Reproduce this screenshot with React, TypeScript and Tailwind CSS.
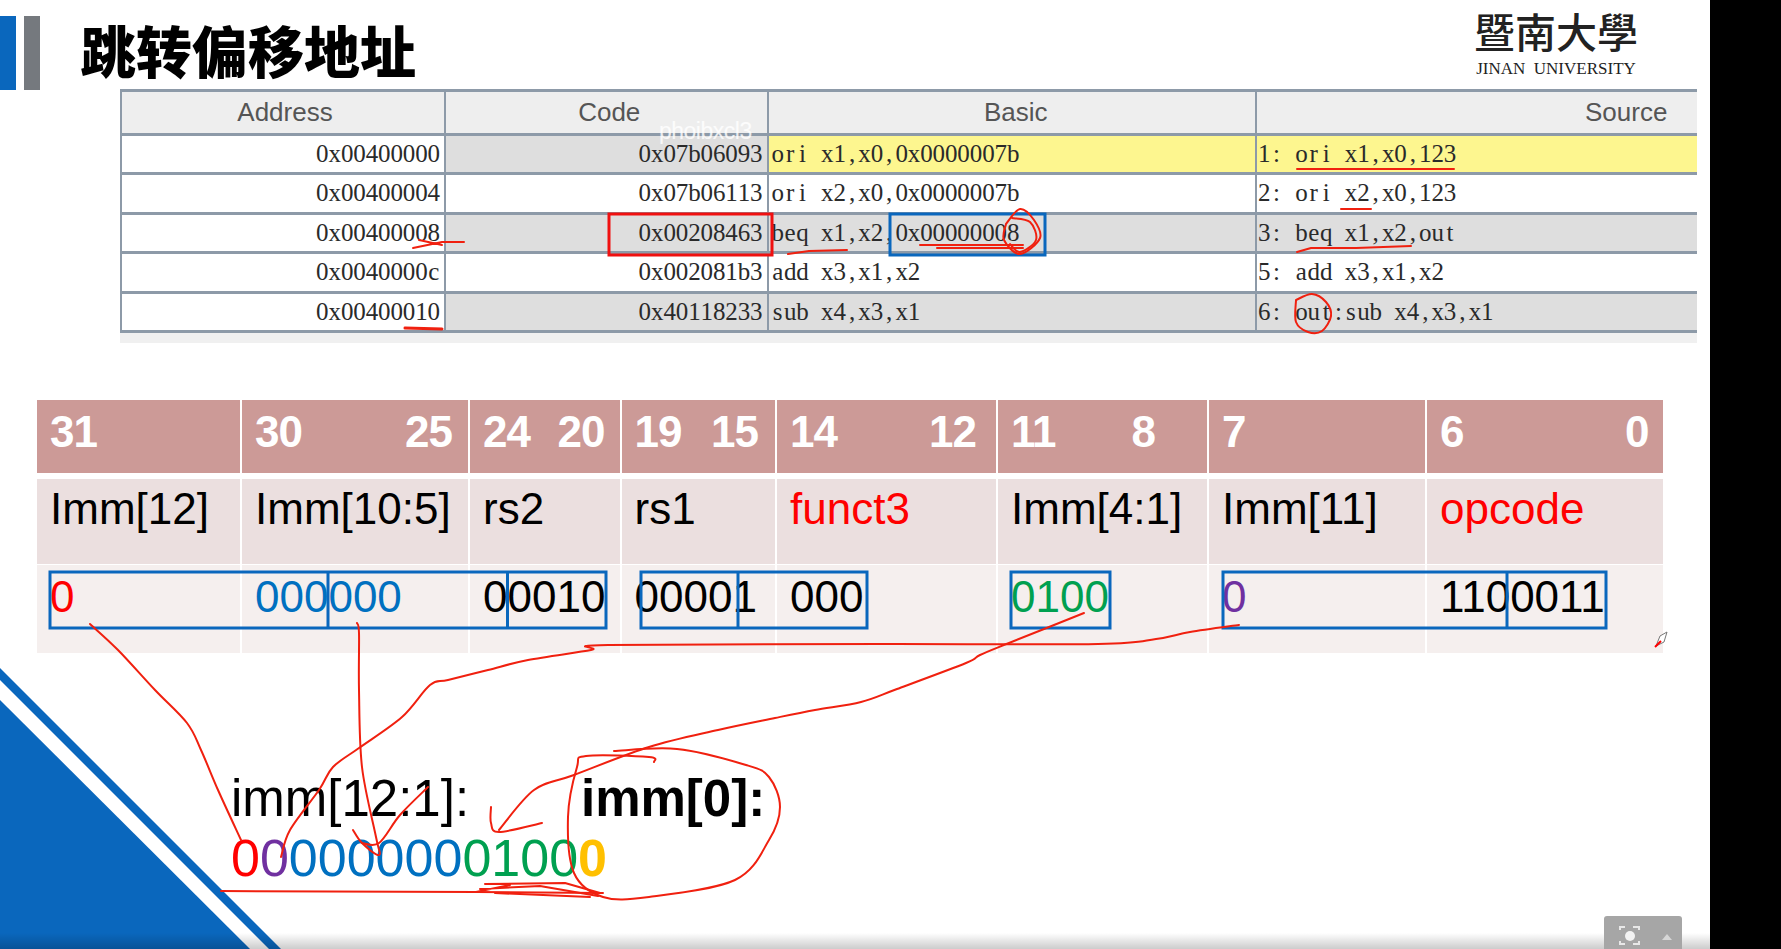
const sans = "font-['Liberation_Sans',Arial,sans-serif]"

const codeRows = [
  { addr: '0x00400000', code: '0x07b06093', basic: 'ori x1,x0,0x0000007b', source: '1: ori x1,x0,123', codeBg: 'bg-[#dedede]', lineBg: 'bg-[#fdf68f]' },
  { addr: '0x00400004', code: '0x07b06113', basic: 'ori x2,x0,0x0000007b', source: '2: ori x2,x0,123', codeBg: 'bg-white', lineBg: 'bg-white' },
  { addr: '0x00400008', code: '0x00208463', basic: 'beq x1,x2,0x00000008', source: '3: beq x1,x2,out', codeBg: 'bg-[#dedede]', lineBg: 'bg-[#dedede]' },
  { addr: '0x0040000c', code: '0x002081b3', basic: 'add x3,x1,x2', source: '5: add x3,x1,x2', codeBg: 'bg-white', lineBg: 'bg-white' },
  { addr: '0x00400010', code: '0x40118233', basic: 'sub x4,x3,x1', source: '6: out:sub x4,x3,x1', codeBg: 'bg-[#dedede]', lineBg: 'bg-[#dedede]' },
]

const fields = [
  { hi: '31', lo: '', loPad: 'pr-[14px]', name: 'Imm[12]', red: false },
  { hi: '30', lo: '25', loPad: 'pr-4', name: 'Imm[10:5]', red: false },
  { hi: '24', lo: '20', loPad: 'pr-[15px]', name: 'rs2', red: false },
  { hi: '19', lo: '15', loPad: 'pr-[17px]', name: 'rs1', red: false },
  { hi: '14', lo: '12', loPad: 'pr-5', name: 'funct3', red: true },
  { hi: '11', lo: '8', loPad: 'pr-[52px]', name: 'Imm[4:1]', red: false },
  { hi: '7', lo: '', loPad: 'pr-[14px]', name: 'Imm[11]', red: false },
  { hi: '6', lo: '0', loPad: 'pr-[14px]', name: 'opcode', red: true },
]

const bits = [
  { text: '0', color: 'text-[#ff0000]' },
  { text: '000000', color: 'text-[#0070c0]' },
  { text: '00010', color: 'text-black' },
  { text: '00001', color: 'text-black' },
  { text: '000', color: 'text-black' },
  { text: '0100', color: 'text-[#00a050]' },
  { text: '0', color: 'text-[#7030a0]' },
  { text: '1100011', color: 'text-black' },
]

const result = [
  { text: '0', color: 'text-[#ff0000]' },
  { text: '0', color: 'text-[#7030a0]' },
  { text: '000000', color: 'text-[#0070c0]' },
  { text: '0100', color: 'text-[#00a050]' },
  { text: '0', color: 'font-bold text-[#ffc000]' },
]

const gridCols = 'grid-cols-[205px_228px_151.5px_155.5px_221px_211px_218px_235.5px]'
const tableCols = 'grid-cols-[326px_322.5px_488.5px_440px]'

// the simulator's font is fixed pitch, so every character gets its own cell
const Mono = ({ text }: { text: string }) => (
  <span className="font-['Liberation_Serif',serif] text-[25px] leading-none text-[#2a2a2a]">
    {text.split('').map((c, i) => (
      <span key={i} className="inline-block w-[12.4px] text-center">
        {c === ' ' ? '\u00a0' : c}
      </span>
    ))}
  </span>
)

// hand drawn strokes: run a catmull-rom spline through the sampled points
const curve = (pts: number[][]) => {
  let d = `M${pts[0][0]} ${pts[0][1]}`
  for (let i = 0; i < pts.length - 1; i++) {
    const p0 = pts[i - 1] ?? pts[i]
    const p1 = pts[i]
    const p2 = pts[i + 1]
    const p3 = pts[i + 2] ?? p2
    const c1 = [p1[0] + (p2[0] - p0[0]) / 6, p1[1] + (p2[1] - p0[1]) / 6]
    const c2 = [p2[0] - (p3[0] - p1[0]) / 6, p2[1] - (p3[1] - p1[1]) / 6]
    d += `C${c1[0]} ${c1[1]} ${c2[0]} ${c2[1]} ${p2[0]} ${p2[1]}`
  }
  return d
}

const strokes = [
  [[90, 624], [118, 650], [155, 690], [187, 723], [201, 750], [218, 790], [241, 840]],
  [[357, 623], [359, 633], [359, 690], [362, 767], [376, 837], [379, 855], [362, 843], [353, 830]],
  [[362, 843], [379, 843], [400, 815], [428, 787]],
  [[281, 857], [290, 830], [319, 790], [333, 767], [359, 748], [402, 717], [430, 685], [448, 680], [488, 670], [528, 660], [591, 650], [608, 645], [880, 644], [1098, 644], [1156, 639], [1190, 632], [1239, 625]],
  [[1084, 613], [1009, 643], [980, 655], [966, 663], [897, 689], [861, 702], [815, 710], [775, 718], [718, 730], [649, 747], [574, 775], [534, 790], [499, 830]],
  [[491, 807], [491, 823], [499, 832], [542, 823]],
  [[654, 762], [649, 757], [586, 756], [577, 767], [568, 817], [574, 873], [603, 897], [649, 897], [735, 880], [769, 840], [780, 807], [769, 777], [746, 765], [677, 749], [614, 751]],
  [[1006, 224], [1020, 209], [1034, 220], [1040, 238], [1020, 254], [1004, 240], [1006, 224]],
  [[1012, 218], [1030, 222], [1036, 240], [1020, 252], [1010, 244]],
  [[1296, 300], [1312, 294], [1326, 302], [1331, 316], [1322, 331], [1308, 332], [1296, 322], [1296, 300]],
]

const Ink = () => (
  <svg className="pointer-events-none absolute left-0 top-0" width="1710" height="949" fill="none">
    {/* blue boxes */}
    <g stroke="#0a67bd" strokeWidth="3">
      <rect x="890" y="214" width="155" height="41" />
      <rect x="50" y="572" width="556" height="56" />
      <path d="M328 572V628M507.500 572V628" />
      <rect x="641" y="572" width="226" height="56" />
      <path d="M738 572V628" />
      <rect x="1011" y="572" width="99" height="56" />
      <rect x="1223" y="572" width="383" height="56" />
      <path d="M1507 572V628" />
    </g>
    <rect x="609" y="214" width="163" height="41" stroke="#f01010" strokeWidth="3" />
    <g stroke="#f0200f" strokeWidth="2" strokeLinecap="round" strokeLinejoin="round">
      {/* top table marks */}
      <path d="M413 248L442 242L464 242M419 240L442 245" />
      <path d="M405 328L442 329" strokeWidth="3" />
      <path d="M788 254L809 251L847 250" />
      <path d="M920 245L1023 245M937 248L1023 248" />
      <path d="M1297 169L1454 169M1341 209L1371 209" />
      <path d="M1297 252L1311 248L1356 248L1411 246" />
      {/* bit field to result lines and circles */}
      {strokes.map((pts, i) => (
        <path key={i} d={curve(pts)} />
      ))}
      <path d="M221 891L476 892L603 893" />
      <path d="M485 884L565 883L600 893M480 889L540 886L598 896M476 892L510 885M495 893L590 897" />
    </g>
    {/* pen cursor */}
    <path d="M1656 646L1660 636L1667 632L1664 642Z" stroke="#777" strokeWidth="1" fill="white" />
    <path d="M1655 647L1661 641" stroke="#f00" strokeWidth="2" />
  </svg>
)

export default function App() {
  return (
    <div className="flex h-[949px] w-[1781px] overflow-hidden bg-black">
      <div className="relative h-[949px] w-[1710px] overflow-hidden bg-white">
        <svg className="absolute left-0 top-0" width="300" height="949">
          <path d="M0 668L281 949H269L0 680Z" fill="#0a67bd" />
          <path d="M0 700L250 949H0Z" fill="#0a67bd" />
        </svg>

        <header className="flex h-[89px] items-start">
          <div className="mt-4 h-[74px] w-4 bg-[#0a67bd]" />
          <div className="ml-2 mt-4 h-[74px] w-4 bg-[#75797e]" />
          <h1 className="ml-10 mt-[21px] font-['Noto_Sans_CJK_SC',sans-serif] text-[56px] font-black leading-[56px] text-black">
            跳转偏移地址
          </h1>
          <div className="ml-auto mr-[72px] mt-0.5 w-[164px] text-[#222]">
            <div className="flex justify-between font-['Noto_Sans_CJK_TC',sans-serif] text-[41px] font-medium leading-[56px]">
              <span>暨</span>
              <span>南</span>
              <span>大</span>
              <span>學</span>
            </div>
            <div className="mt-0.5 whitespace-nowrap text-center font-['Liberation_Serif',serif] text-[17px] leading-[17px]">
              JINAN&nbsp; UNIVERSITY
            </div>
          </div>
        </header>

        <section className="relative ml-[120px] w-[1577px] bg-[#f0f0f0] pb-[10px]">
          <div className={`grid h-[47px] ${tableCols} border-y-[3px] border-[#8d9aa8] bg-[#eeeeee] font-['Liberation_Sans',sans-serif] text-[26px] leading-[41px] text-[#555]`}>
            <div className="border-x-2 border-[#8d9aa8] pl-1 text-center">Address</div>
            <div className="border-r-2 border-[#8d9aa8] pl-1.5 text-center">Code</div>
            <div className="border-r-2 border-[#8d9aa8] pl-2 text-center">Basic</div>
            <div className="pl-[328px]">Source</div>
          </div>
          {codeRows.map((row) => (
            <div key={row.addr} className={`grid h-[39.400px] ${tableCols} border-b-[3px] border-[#8d9aa8] leading-[31px]`}>
              <div className="border-x-2 border-[#8d9aa8] bg-white pr-1 pt-[5px] text-right">
                <Mono text={row.addr} />
              </div>
              <div className={`border-r-2 border-[#8d9aa8] pr-1 pt-[5px] text-right ${row.codeBg}`}>
                <Mono text={row.code} />
              </div>
              <div className={`border-r-2 border-[#8d9aa8] pl-[3px] pt-[5px] ${row.lineBg}`}>
                <Mono text={row.basic} />
              </div>
              <div className={`pl-px pt-[5px] ${row.lineBg}`}>
                <Mono text={row.source} />
              </div>
            </div>
          ))}
          <span className={`absolute left-[539px] top-[35px] block ${sans} text-[23px] leading-[14px] tracking-[-0.5px] text-white/80`}>
            phoibxcl3
          </span>
        </section>

        <section className={`ml-[37px] mt-[57px] w-[1625.500px] ${sans}`}>
          <div className={`grid h-[73px] ${gridCols} bg-[#cc9a97]`}>
            {fields.map((f) => (
              <div
                key={f.hi}
                className={`flex justify-between border-r-2 border-white pl-[13px] ${f.loPad} text-[44px] font-bold leading-[64px] tracking-[-1px] text-white last:border-r-0`}
              >
                <span>{f.hi}</span>
                <span>{f.lo}</span>
              </div>
            ))}
          </div>
          <div className={`mt-[6px] grid h-[85px] ${gridCols} bg-[#ebdfdf]`}>
            {fields.map((f) => (
              <div
                key={f.name}
                className={`border-r-2 border-white pl-[13px] text-[44px] leading-[60px] last:border-r-0 ${f.red ? 'text-[#ff0000]' : 'text-black'}`}
              >
                {f.name}
              </div>
            ))}
          </div>
          <div className={`mt-px grid h-[88px] ${gridCols} bg-[#f5efee]`}>
            {bits.map((b, i) => (
              <div
                key={i}
                className={`border-r-2 border-white pl-[13px] text-[44px] leading-[64px] last:border-r-0 ${b.color}`}
              >
                {b.text}
              </div>
            ))}
          </div>
        </section>

        <section className={`relative ml-[231px] mt-[114px] ${sans}`}>
          <div className="flex text-[51px] leading-[64px] text-black">
            <span className="w-[350px]">imm[12:1]:</span>
            <span className="font-bold">imm[0]:</span>
          </div>
          <div className="-mt-[5px] text-[52px] leading-[64px]">
            {result.map((r, i) => (
              <span key={i} className={r.color}>
                {r.text}
              </span>
            ))}
          </div>
        </section>

        <Ink />

        <div className="absolute bottom-0 left-0 h-4 w-full bg-linear-to-b from-transparent to-black/20" />
        <div className="absolute bottom-0 right-7 h-[33px] w-[78px] rounded-t-[3px] bg-[#a6a6a6]">
          <svg width="78" height="33" fill="none">
            <path d="M16 14V11H21M29 11H35V14M35 25V28H29M21 28H16V25" stroke="#e8e8e8" strokeWidth="2" />
            <circle cx="26" cy="20" r="5" fill="#f2f2f2" />
            <path d="M58 24L63 18L68 24Z" fill="#d6d6d6" />
          </svg>
        </div>
      </div>
    </div>
  )
}
